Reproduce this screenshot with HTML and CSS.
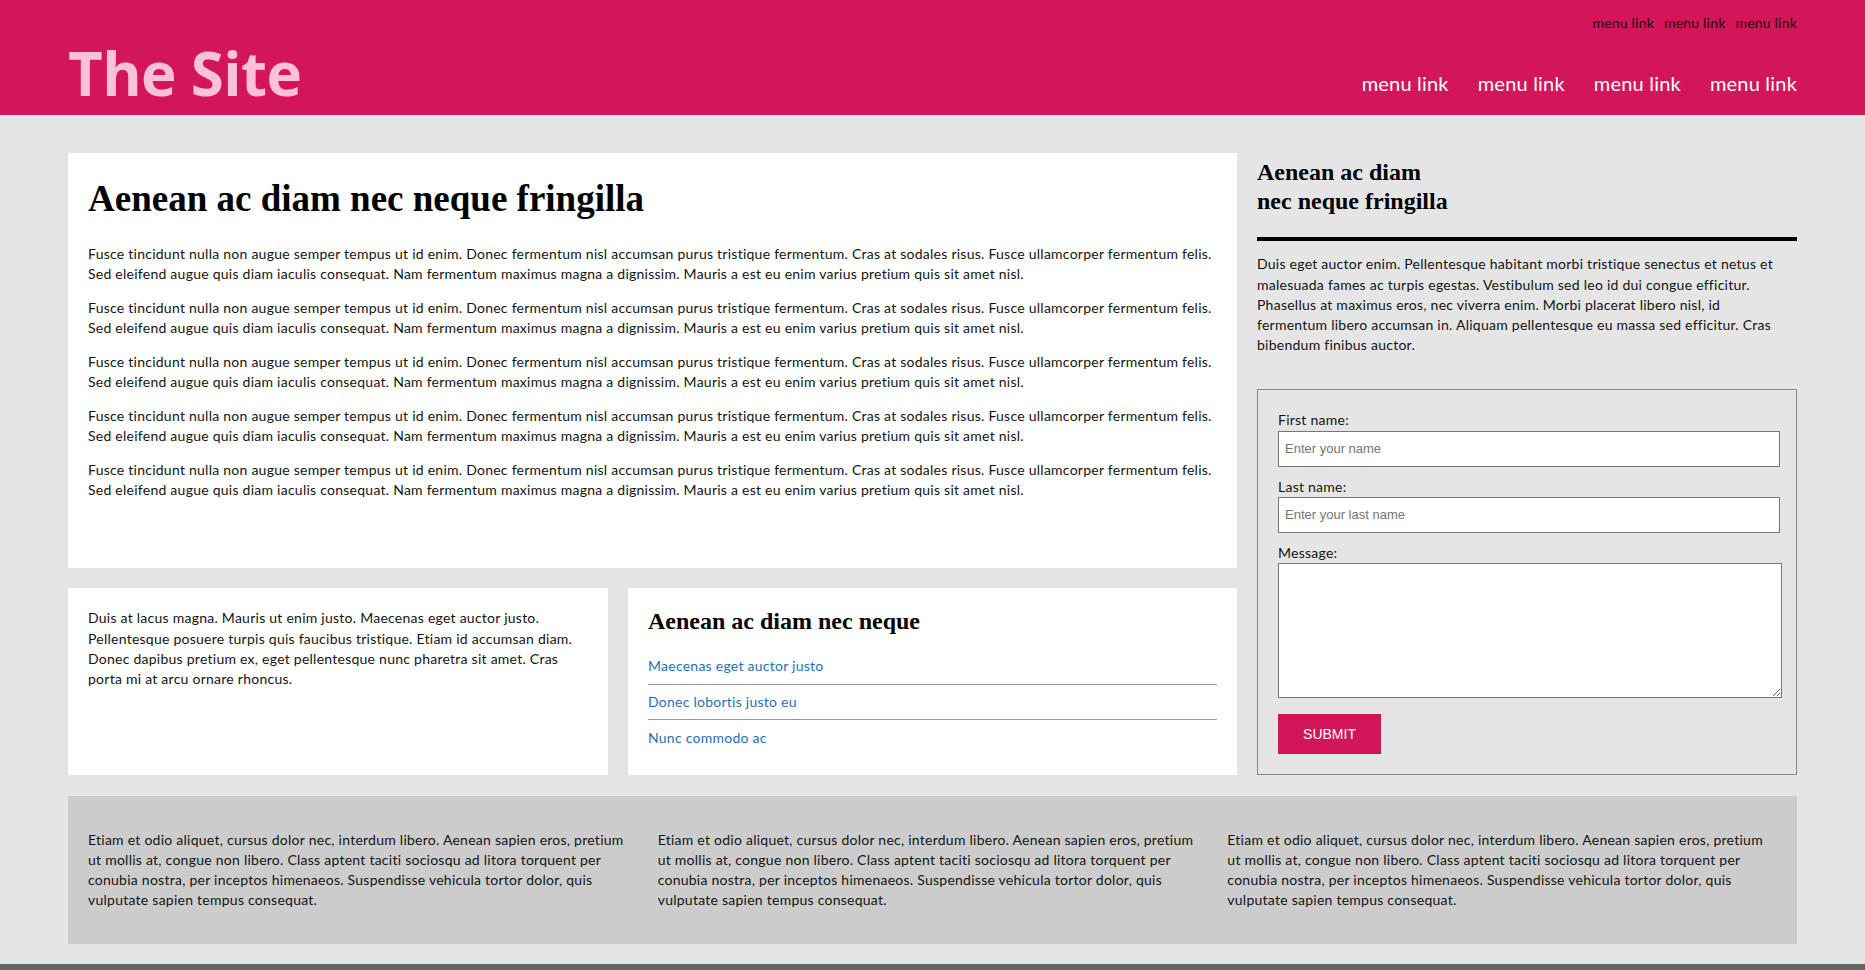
FILE: index.html
```html
<!DOCTYPE html>
<html lang="en">
<head>
<meta charset="utf-8">
<title>The Site</title>
<link rel="stylesheet" href="styles.css">
</head>
<body>
<header class="site-header">
  <a class="brand" href="#">The Site</a>
  <div class="nav-area">
    <nav class="top-nav">
      <a href="#">menu link</a>
      <a href="#">menu link</a>
      <a href="#">menu link</a>
    </nav>
    <nav class="main-nav">
      <a href="#">menu link</a>
      <a href="#">menu link</a>
      <a href="#">menu link</a>
      <a href="#">menu link</a>
    </nav>
  </div>
</header>

<main class="layout">
  <article class="panel article">
    <h1>Aenean ac diam nec neque fringilla</h1>
    <p>Fusce tincidunt nulla non augue semper tempus ut id enim. Donec fermentum nisl accumsan purus tristique fermentum. Cras at sodales risus. Fusce ullamcorper fermentum felis. Sed eleifend augue quis diam iaculis consequat. Nam fermentum maximus magna a dignissim. Mauris a est eu enim varius pretium quis sit amet nisl.</p>
    <p>Fusce tincidunt nulla non augue semper tempus ut id enim. Donec fermentum nisl accumsan purus tristique fermentum. Cras at sodales risus. Fusce ullamcorper fermentum felis. Sed eleifend augue quis diam iaculis consequat. Nam fermentum maximus magna a dignissim. Mauris a est eu enim varius pretium quis sit amet nisl.</p>
    <p>Fusce tincidunt nulla non augue semper tempus ut id enim. Donec fermentum nisl accumsan purus tristique fermentum. Cras at sodales risus. Fusce ullamcorper fermentum felis. Sed eleifend augue quis diam iaculis consequat. Nam fermentum maximus magna a dignissim. Mauris a est eu enim varius pretium quis sit amet nisl.</p>
    <p>Fusce tincidunt nulla non augue semper tempus ut id enim. Donec fermentum nisl accumsan purus tristique fermentum. Cras at sodales risus. Fusce ullamcorper fermentum felis. Sed eleifend augue quis diam iaculis consequat. Nam fermentum maximus magna a dignissim. Mauris a est eu enim varius pretium quis sit amet nisl.</p>
    <p>Fusce tincidunt nulla non augue semper tempus ut id enim. Donec fermentum nisl accumsan purus tristique fermentum. Cras at sodales risus. Fusce ullamcorper fermentum felis. Sed eleifend augue quis diam iaculis consequat. Nam fermentum maximus magna a dignissim. Mauris a est eu enim varius pretium quis sit amet nisl.</p>
  </article>

  <section class="panel intro">
    <p>Duis at lacus magna. Mauris ut enim justo. Maecenas eget auctor justo. Pellentesque posuere turpis quis faucibus tristique. Etiam id accumsan diam. Donec dapibus pretium ex, eget pellentesque nunc pharetra sit amet. Cras porta mi at arcu ornare rhoncus.</p>
  </section>

  <section class="panel links">
    <h3>Aenean ac diam nec neque</h3>
    <ul>
      <li><a href="#">Maecenas eget auctor justo</a></li>
      <li><a href="#">Donec lobortis justo eu</a></li>
      <li><a href="#">Nunc commodo ac</a></li>
    </ul>
  </section>

  <aside class="sidebar">
    <h2>Aenean ac diam<br>nec neque fringilla</h2>
    <p>Duis eget auctor enim. Pellentesque habitant morbi tristique senectus et netus et malesuada fames ac turpis egestas. Vestibulum sed leo id dui congue efficitur. Phasellus at maximus eros, nec viverra enim. Morbi placerat libero nisl, id fermentum libero accumsan in. Aliquam pellentesque eu massa sed efficitur. Cras bibendum finibus auctor.</p>
    <form class="contact">
      <label for="fname">First name:</label>
      <input id="fname" type="text" placeholder="Enter your name">
      <label for="lname">Last name:</label>
      <input id="lname" type="text" placeholder="Enter your last name">
      <label for="msg">Message:</label>
      <textarea id="msg"></textarea>
      <button type="button">Submit</button>
    </form>
  </aside>
</main>

<section class="info">
  <p>Etiam et odio aliquet, cursus dolor nec, interdum libero. Aenean sapien eros, pretium ut mollis at, congue non libero. Class aptent taciti sociosqu ad litora torquent per conubia nostra, per inceptos himenaeos. Suspendisse vehicula tortor dolor, quis vulputate sapien tempus consequat.</p>
  <p>Etiam et odio aliquet, cursus dolor nec, interdum libero. Aenean sapien eros, pretium ut mollis at, congue non libero. Class aptent taciti sociosqu ad litora torquent per conubia nostra, per inceptos himenaeos. Suspendisse vehicula tortor dolor, quis vulputate sapien tempus consequat.</p>
  <p>Etiam et odio aliquet, cursus dolor nec, interdum libero. Aenean sapien eros, pretium ut mollis at, congue non libero. Class aptent taciti sociosqu ad litora torquent per conubia nostra, per inceptos himenaeos. Suspendisse vehicula tortor dolor, quis vulputate sapien tempus consequat.</p>
</section>

<footer class="page-bottom"></footer>
</body>
</html>
```

FILE: styles.css
```css
html, body {
  margin: 0;
  padding: 0;
}

body {
  background: #e5e5e5;
  font-family: Lato, "Liberation Sans", sans-serif;
  font-size: 14px;
  line-height: 20.25px;
  letter-spacing: 0.25px;
  color: #141414;
}

p {
  margin: 13.5px 0;
}

/* ---------- header ---------- */
.site-header {
  box-sizing: border-box;
  height: 115px;
  padding: 0 68px;
  background: #d3155a;
  display: flex;
  justify-content: space-between;
}

.brand {
  padding-top: 43px;
  font-family: "Open Sans", sans-serif;
  font-weight: 700;
  font-size: 60px;
  line-height: 60px;
  letter-spacing: -0.6px;
  color: #ffc1da;
  text-decoration: none;
}

.nav-area {
  display: flex;
  flex-direction: column;
  align-items: flex-end;
}

.top-nav {
  padding-top: 13px;
  display: flex;
  gap: 10px;
}

.top-nav a {
  font-size: 14px;
  line-height: 20px;
  letter-spacing: 0.2px;
  color: #1a0a10;
  text-decoration: none;
}

.main-nav {
  margin-top: 38px;
  display: flex;
  gap: 29px;
}

.main-nav a {
  font-size: 20px;
  line-height: 24px;
  letter-spacing: 0.2px;
  color: #fff;
  text-decoration: none;
}

/* ---------- main grid ---------- */
.layout {
  margin: 38px 68px 0;
  display: grid;
  grid-template-columns: 540px 1fr 540px;
  grid-template-rows: 1fr auto;
  gap: 20px;
}

.panel {
  background: #fff;
  padding: 20px;
}

.article {
  grid-column: 1 / 3;
  grid-row: 1;
  padding: 24.5px 20px 20px;
}

.article h1 {
  margin: 0 0 24.5px;
  font-family: "Liberation Serif", "Times New Roman", serif;
  font-weight: bold;
  font-size: 37px;
  line-height: 42px;
  letter-spacing: 0;
  color: #000;
}

.intro {
  grid-column: 1;
  grid-row: 2;
}

.intro p {
  margin: 0;
}

.links {
  grid-column: 2;
  grid-row: 2;
}

.links h3 {
  margin: 0 0 13.5px;
  font-family: "Liberation Serif", "Times New Roman", serif;
  font-weight: bold;
  font-size: 24px;
  line-height: normal;
  letter-spacing: 0;
  color: #000;
}

.links ul {
  list-style: none;
  margin: 0;
  padding: 0;
}

.links li {
  padding: 7.25px 0;
  border-bottom: 1px solid #999;
}

.links li:last-child {
  border-bottom: none;
}

.links a {
  color: #1f6fbd;
  text-decoration: none;
}

/* ---------- sidebar ---------- */
.sidebar {
  grid-column: 3;
  grid-row: 1 / 3;
}

.sidebar h2 {
  margin: 5.4px 0 0;
  padding-bottom: 20.6px;
  border-bottom: 4px solid #000;
  font-family: "Liberation Serif", "Times New Roman", serif;
  font-weight: bold;
  font-size: 24px;
  line-height: 29px;
  letter-spacing: 0;
  color: #000;
}

.sidebar p {
  margin: 13.5px 0 0;
  padding-right: 20px;
}

.contact {
  margin-top: 33.75px;
  border: 1px solid #888;
  padding: 20px;
}

.contact label {
  display: block;
}

.contact input,
.contact textarea {
  display: block;
  box-sizing: border-box;
  border: 1px solid #767676;
  background: #fff;
  padding: 0 6px;
  margin: 0 0 10px;
  font-family: "Liberation Sans", Arial, sans-serif;
  font-size: 13px;
  letter-spacing: 0;
}

.contact input {
  width: calc(100% + 4px);
  height: 36px;
}

.contact input::placeholder {
  color: #757575;
}

.contact textarea {
  width: calc(100% + 6px);
  height: 135px;
  margin-bottom: 16px;
}

.contact button {
  display: block;
  width: 103px;
  height: 40px;
  border: 0;
  padding: 0;
  background: #d3155a;
  color: #fff;
  font-family: "Liberation Sans", Arial, sans-serif;
  font-size: 14px;
  letter-spacing: 0;
  text-transform: uppercase;
  cursor: pointer;
}

/* ---------- info band ---------- */
.info {
  margin: 21px 68px 0;
  padding: 20px 0 20px 20px;
  background: #ccc;
  display: grid;
  grid-template-columns: repeat(3, 1fr);
}

.info p {
  padding-right: 26px;
}

.page-bottom {
  margin-top: 20px;
  height: 6px;
  background: #666;
}
```
